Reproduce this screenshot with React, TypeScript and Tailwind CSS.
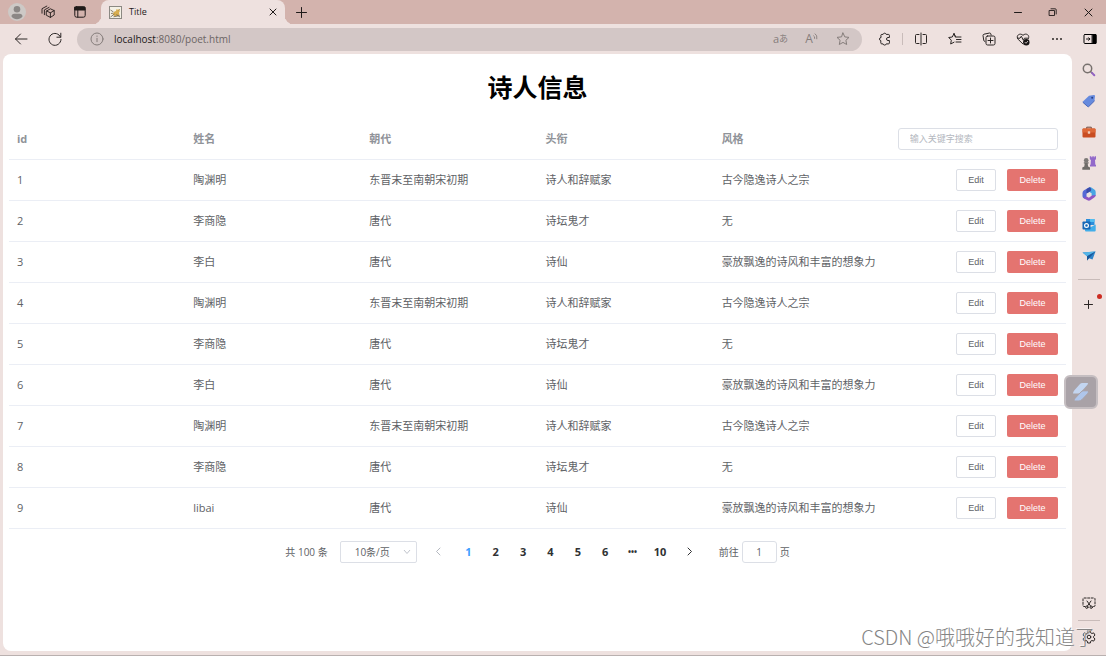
import { useState } from "react";
import type { ReactNode } from "react";

const poets = [
  { id: 1, name: "陶渊明", dynasty: "东晋末至南朝宋初期", title: "诗人和辞赋家", style: "古今隐逸诗人之宗" },
  { id: 2, name: "李商隐", dynasty: "唐代", title: "诗坛鬼才", style: "无" },
  { id: 3, name: "李白", dynasty: "唐代", title: "诗仙", style: "豪放飘逸的诗风和丰富的想象力" },
  { id: 4, name: "陶渊明", dynasty: "东晋末至南朝宋初期", title: "诗人和辞赋家", style: "古今隐逸诗人之宗" },
  { id: 5, name: "李商隐", dynasty: "唐代", title: "诗坛鬼才", style: "无" },
  { id: 6, name: "李白", dynasty: "唐代", title: "诗仙", style: "豪放飘逸的诗风和丰富的想象力" },
  { id: 7, name: "陶渊明", dynasty: "东晋末至南朝宋初期", title: "诗人和辞赋家", style: "古今隐逸诗人之宗" },
  { id: 8, name: "李商隐", dynasty: "唐代", title: "诗坛鬼才", style: "无" },
  { id: 9, name: "libai", dynasty: "唐代", title: "诗仙", style: "豪放飘逸的诗风和丰富的想象力" },
];

const pages = ["1", "2", "3", "4", "5", "6", "•••", "10"];

function Icon({ size = 14, children }: { size?: number; children: ReactNode }) {
  return (
    <svg width={size} height={size} viewBox={`0 0 ${size} ${size}`} fill="none" stroke="currentColor" strokeLinecap="round" strokeLinejoin="round" className="shrink-0">
      {children}
    </svg>
  );
}

function IconButton({ label, className, children }: { label: string; className: string; children: ReactNode }) {
  return (
    <button aria-label={label} className={`flex shrink-0 items-center justify-center ${className}`}>
      {children}
    </button>
  );
}

function TitleBar() {
  return (
    <div className="flex h-6 shrink-0 items-center bg-[#d3b3ad] text-[#1f1a19]">
      <IconButton label="Profile" className="w-[34px] h-6">
        <svg width="18" height="18" viewBox="0 0 18 18">
          <circle cx="9" cy="9" r="9" fill="#cdc9c6" />
          <circle cx="9" cy="6.2" r="3.3" fill="#8b8785" />
          <path d="M3.5 13.5c0-2 1.2-2.8 2.8-2.8h5.4c1.6 0 2.8.8 2.8 2.8-1.4 1.8-3.3 2.7-5.5 2.7s-4.1-.9-5.5-2.7z" fill="#8b8785" />
        </svg>
      </IconButton>
      <IconButton label="Workspaces" className="w-7 h-6">
        <Icon>
          <g strokeWidth=".9">
            <path d="M5.6 6 9.4 3.8 13.2 5.6V10l-3.8 2.4-3.8-2zM5.6 6l3.8 1.8 3.8-2.2M9.4 7.8v4.6" />
            <path d="M3.4 9.7V4.9L8 2.4M1 8.2V3.7L5.8 1.1" />
          </g>
        </Icon>
      </IconButton>
      <IconButton label="Tab actions" className="w-9 h-6">
        <Icon>
          <rect x="1.8" y="1.8" width="10.4" height="10.4" rx="1.8" />
          <path d="M2 2h10v3H2z" fill="currentColor" />
          <path d="M4.8 5v7" />
        </Icon>
      </IconButton>
      <div className="relative ml-[3px] flex h-6 w-[184px] items-center rounded-t-lg bg-[#eee1df] pl-2 pr-1 before:absolute before:bottom-0 before:-left-2 before:size-2 before:rounded-br-lg before:shadow-[3px_3px_0_#eee1df] after:absolute after:bottom-0 after:-right-2 after:size-2 after:rounded-bl-lg after:shadow-[-3px_3px_0_#eee1df]">
        <svg width="13" height="13" viewBox="0 0 13 13" className="shrink-0">
          <rect x=".5" y=".5" width="12" height="12" fill="#f4f1e6" stroke="#8b8983" />
          <path d="M5.5 5.5 7 5l.6-2 1.2.8 1.6-.8.4 2.2-.8 1.6.6 2.4-2 .8-3 .2L3.5 8z" fill="#d8ae4e" />
          <path d="M1.5 4l3 2M1.5 11l4-3M2 7.5l2-.3M10.5 3.5l-.8.8M4.5 10.8l6-1.2M7.5 8.5l3.5 2.5" stroke="#6b6251" strokeWidth=".8" />
        </svg>
        <span className="ml-[7px] flex-1 text-[9px]">Title</span>
        <IconButton label="Close tab" className="size-4">
          <Icon size={8}><path d="M1 1l6 6M7 1 1 7" /></Icon>
        </IconButton>
      </div>
      <IconButton label="New tab" className="w-8 h-6">
        <Icon size={11}><path d="M5.5.5v10M.5 5.5h10" /></Icon>
      </IconButton>
      <div className="flex-1" />
      <IconButton label="Minimize" className="w-[35px] h-6">
        <Icon size={8}><path d="M.5 4.5h7" /></Icon>
      </IconButton>
      <IconButton label="Restore" className="w-[35px] h-6">
        <Icon size={9}><path d="M1.5 2.5h5v5h-5zM3 .8h4.2q1 0 1 1V6" strokeWidth=".9" /></Icon>
      </IconButton>
      <IconButton label="Close" className="w-9 h-6">
        <Icon size={9}><path d="M1 1l7 7M8 1 1 8" /></Icon>
      </IconButton>
    </div>
  );
}

function Toolbar() {
  return (
    <div className="flex h-[30px] shrink-0 items-center text-[#2b2625]">
      <IconButton label="Back" className="ml-1 w-[34px] h-[30px]">
        <Icon><path d="M13 7H1.5M6.5 2 1.5 7l5 5" /></Icon>
      </IconButton>
      <IconButton label="Refresh" className="w-[34px] h-[30px]">
        <Icon><path d="M12.6 5.2A6 6 0 1 0 13 7.5M12.8 1.2v4H8.9" /></Icon>
      </IconButton>
      <div className="ml-[5px] flex h-[23px] flex-1 items-center rounded-full bg-[#d3c7c6] pl-[13px] pr-1 text-[#857d7b]">
        <Icon>
          <circle cx="7" cy="7" r="6" />
          <path d="M7 6.3v3.4M7 4v.4" />
        </Icon>
        <div className="ml-[10px] flex-1 text-[10px] leading-4 text-[#6c6564]">
          <span className="text-[#1d1919]">localhost</span>:8080/poet.html
        </div>
        <IconButton label="Translate" className="w-[31px] h-5 text-[11px] leading-4">
          a<span className="text-[9px]">あ</span>
        </IconButton>
        <IconButton label="Read aloud" className="w-[31px] h-5 text-[12px] leading-4">
          A
          <svg width="5" height="12" viewBox="0 0 5 12" fill="none" stroke="currentColor" strokeWidth=".9">
            <path d="M.3 2.6q1.8.8 1.3 3.2M1.8.6q2.8 1.6 2 5.6" />
          </svg>
        </IconButton>
        <IconButton label="Favorite" className="w-[31px] h-5">
          <Icon><path d="M7 1l1.8 3.9 4.2.5-3.1 2.9.8 4.2L7 10.4l-3.7 2.1.8-4.2L1 5.4l4.2-.5z" /></Icon>
        </IconButton>
      </div>
      <IconButton label="Extensions" className="ml-[5px] w-[35px] h-[30px]">
        <Icon><path d="M2.8 3.4q0-1 1-1h1.3a1.6 1.6 0 0 1 3.1 0h2.2q1 0 1 1v2.1H10a1.5 1.5 0 0 0 0 3h1.4v2.4q0 1-1 1H8.2a1.6 1.6 0 0 1-3.1 0H3.8q-1 0-1-1V8.7a1.7 1.7 0 0 1 0-3.3z" /></Icon>
      </IconButton>
      <div className="h-3 w-px bg-[#c9bcba]" />
      <IconButton label="Split screen" className="w-[35px] h-[30px]">
        <Icon><path d="M5 2.5H2.5q-1 0-1 1v7q0 1 1 1H5M9 2.5h2.5q1 0 1 1v7q0 1-1 1H9M7 1v12" /></Icon>
      </IconButton>
      <IconButton label="Favorites" className="w-[34px] h-[30px]">
        <Icon><path d="M7.5 5 6 1.5 4.3 5l-3.6.5 2.6 2.7-.6 3.8 3.3-1.8M6 1.5 7.5 5H13M8.5 7.5H13M8 10h5" /></Icon>
      </IconButton>
      <IconButton label="Collections" className="w-[34px] h-[30px]">
        <Icon>
          <path d="M3 9.5 1.8 8.7 1 3.5q0-1 1-1.3L7.6 1q1 0 1.3 1l.2 1" />
          <rect x="4" y="4" width="9" height="9" rx="1.6" />
          <path d="M8.5 6v5M6 8.5h5" />
        </Icon>
      </IconButton>
      <IconButton label="Browser essentials" className="w-[34px] h-[30px]">
        <Icon>
          <path d="M7 12 2.2 7.4C-.8 3.6 4 .4 7 3.3c3-2.9 7.4 0 5.3 3.4M1.5 6.2H4l1.3-2 2 4 1.2-2h3" />
          <circle cx="10.3" cy="10.3" r="3.2" fill="#171313" stroke="none" />
          <path d="M9 10.3l1 1 1.7-2" stroke="#eee1df" strokeWidth=".8" />
        </Icon>
      </IconButton>
      <IconButton label="More" className="w-[34px] h-[30px]">
        <Icon size={12}>
          <g fill="currentColor" stroke="none">
            <circle cx="2" cy="6" r="1" /><circle cx="6" cy="6" r="1" /><circle cx="10" cy="6" r="1" />
          </g>
        </Icon>
      </IconButton>
      <IconButton label="Sidebar" className="w-8 h-[30px] text-black">
        <Icon>
          <rect x="1" y="2.5" width="12" height="9" rx="1" />
          <path d="M9.5 2.5H13v9H9.5z" fill="currentColor" />
          <path d="M3.5 7h3.3M5.6 5.7 6.9 7 5.6 8.3" strokeWidth=".9" />
        </Icon>
      </IconButton>
    </div>
  );
}

const sideApps = [
  {
    label: "Search",
    icon: (
      <>
        <circle cx="5.5" cy="5.5" r="4.2" stroke="#77716e" strokeWidth="1.5" />
        <path d="M8.7 8.7l1.3 1.2" stroke="#77716e" strokeWidth="1.5" />
        <path d="M10 9.9l2.3 2.3" stroke="#9263c2" strokeWidth="2" />
      </>
    ),
  },
  {
    label: "Shopping",
    icon: (
      <>
        <path d="M1.2 7.3 7 1.7l5-.7q1 0 1 1l-.6 5-5.5 5.4q-.8.7-1.6 0L1.2 8.8q-.7-.8 0-1.5z" fill="#668ade" stroke="none" />
        <path d="M1 8.4l4.8 4.2q.6.4 1.1-.2l5.5-5.4" stroke="#4d68b8" />
        <circle cx="10.2" cy="3.8" r="1" fill="#293f85" stroke="none" />
      </>
    ),
  },
  {
    label: "Tools",
    icon: (
      <>
        <path d="M4.7 3.5V2.2h4.6v1.3" stroke="#73483a" />
        <rect x=".5" y="3.5" width="13" height="9" rx="1" fill="#c94d22" stroke="none" />
        <path d="M.5 4.5q0-1 1-1h11q1 0 1 1v3H.5z" fill="#dd6838" stroke="none" />
        <rect x="5.8" y="6.2" width="2.4" height="2.6" rx=".5" fill="#f0cdbb" stroke="none" />
      </>
    ),
  },
  {
    label: "Games",
    icon: (
      <g stroke="none">
        <path d="M7.8.3h1.5v1h1v-1h1.5v1h.8v-1H14v3l-1 .8.3 4.4.7.6v1.4H8v-1.4l.6-.6.3-4.4-1.1-.8z" fill="#9269ca" />
        <circle cx="4.2" cy="4.2" r="2.3" fill="#7c7977" />
        <path d="M1.8 6.2h4.8v1.4H5.7l.4 2.8 1.9 1v2.3H.3v-2.3l2-1 .4-2.8h-.9z" fill="#6f6c69" />
      </g>
    ),
  },
  {
    label: "Microsoft 365",
    icon: (
      <g stroke="none">
        <path d="M7.5.3 2 3.3Q.5 4.2.5 6v3.3q0 1.8 2 2.2 2 .3 2-1.8V6.5L8.8 4z" fill="#5668d6" />
        <path d="M7 .4q1.2-.6 2.3.1l3 1.9Q13.7 3.3 13.7 5v3.6q-.6 1.7-2.6 1.1L9.6 8.6V6.3L5.4 3.8z" fill="#48a5e3" />
        <path d="M13.7 8.1q0 1.5-1.4 2.4l-4 2.8q-1.4.8-2.8 0L2 11.4 1 9.8q1.8 1.6 3.6-.2l2.3 1.2 3-2.2z" fill="#8f55c4" />
        <path d="M7.6.2 4.5 2v4.5L8.8 4q1.3-2.2-1.2-3.8z" fill="#3b4ca9" />
      </g>
    ),
  },
  {
    label: "Outlook",
    icon: (
      <g stroke="none">
        <path d="M4 1h8.5v6H4z" fill="#2b8edb" />
        <path d="M8 1h4.5v3H8z" fill="#52bdf0" />
        <path d="M3 6.5l5 3 5.7-3v6q0 1-1 1H4q-1 0-1-1z" fill="#42aee9" />
        <rect x=".5" y="3.5" width="8" height="8" rx=".8" fill="#1767b6" />
        <circle cx="4.5" cy="7.5" r="1.9" stroke="white" strokeWidth="1.2" fill="none" />
      </g>
    ),
  },
  {
    label: "Drop",
    icon: (
      <g stroke="none">
        <path d="M.5 3.5 13.5 2.5 10.5 10.5 7 9.2 5 11.5V7.2z" fill="#2c83c9" />
        <path d="M.5 3.5 13.5 2.5 5 7.2z" fill="#55b5e7" />
        <path d="M13.5 2.5 5 7.2v4.3l2-2.3z" fill="#19579a" />
      </g>
    ),
  },
];

function Sidebar() {
  return (
    <aside className="flex w-[34px] shrink-0 flex-col items-center text-[#2b2625]">
      {sideApps.map((app) => (
        <IconButton key={app.label} label={app.label} className="h-[31px] w-[34px]">
          <Icon>{app.icon}</Icon>
        </IconButton>
      ))}
      <div className="mt-2 h-px w-[22px] bg-[#c8bbb9]" />
      <button aria-label="Add" className="relative mt-[9px] flex h-[31px] w-[34px] shrink-0 items-center justify-center">
        <Icon size={10}><path d="M4.5.5v8M.5 4.5h8" /></Icon>
        <span className="absolute right-1 top-[5px] size-[5px] rounded-full bg-[#cc2c22]" />
      </button>
      <div className="flex-1" />
      <IconButton label="Screenshot" className="h-[31px] w-[34px]">
        <Icon>
          <path d="M3 10.5H2q-1 0-1-1V3q0-1 1-1h10q1 0 1 1v6.5q0 1-1 1h-1" strokeDasharray="2 1.5" />
          <path d="M5 5l3.6 5M9 5l-3.6 5" />
          <circle cx="4.8" cy="11.2" r="1.2" /><circle cx="9.2" cy="11.2" r="1.2" />
        </Icon>
      </IconButton>
      <div className="mt-[2px] h-px w-[22px] bg-[#c8bbb9]" />
      <IconButton label="Settings" className="mb-[3px] h-[31px] w-[34px]">
        <Icon>
          <path d="M5.7 1h2.6l.4 1.8 1.2.7 1.8-.6L13 5.1l-1.4 1.3v1.3L13 8.9l-1.3 2.2-1.8-.6-1.2.7L8.3 13H5.7l-.4-1.8-1.2-.7-1.8.6L1 8.9l1.4-1.2V6.4L1 5.1l1.3-2.2 1.8.6 1.2-.7z" />
          <circle cx="7" cy="7" r="1.8" />
        </Icon>
      </IconButton>
    </aside>
  );
}

function PoetTable() {
  const [keyword, setKeyword] = useState("");
  const rows = poets.filter((p) => p.name.includes(keyword));

  return (
    <table className="w-full table-fixed border-collapse text-left text-[11px] leading-4 text-[#606266]">
      <thead className="text-[#909399]">
        <tr className="h-10 border-b border-[#ebeef5]">
          <th className="px-2">id</th>
          <th className="px-2">姓名</th>
          <th className="px-2">朝代</th>
          <th className="px-2">头衔</th>
          <th className="px-2">风格</th>
          <th className="px-2">
            <input
              type="text"
              aria-label="输入关键字搜索"
              placeholder="输入关键字搜索"
              value={keyword}
              onChange={(e) => setKeyword(e.target.value)}
              className="block h-[22px] w-full rounded-[3px] border border-[#dcdfe6] px-[11px] text-[9px] font-normal placeholder:text-[#b4b8c0] focus:outline-none"
            />
          </th>
        </tr>
      </thead>
      <tbody>
        {rows.map((p) => (
          <tr key={p.id} className="h-[41px] border-b border-[#ebeef5]">
            <td className="px-2">{p.id}</td>
            <td className="px-2">{p.name}</td>
            <td className="px-2">{p.dynasty}</td>
            <td className="px-2">{p.title}</td>
            <td className="px-2">{p.style}</td>
            <td className="px-2">
              <div className="flex justify-end gap-[11px] font-['Liberation_Sans',sans-serif] text-[9px]">
                <button className="h-[22px] w-10 rounded-[2px] border border-[#dcdfe6] bg-white">Edit</button>
                <button className="h-[22px] w-[51px] rounded-[2px] bg-[#e47470] text-white">Delete</button>
              </div>
            </td>
          </tr>
        ))}
      </tbody>
    </table>
  );
}

function Pagination() {
  const [page, setPage] = useState("1");

  return (
    <nav className="mt-3 flex items-center justify-center text-[10px] leading-4 text-[#606266]">
      <span>共 100 条</span>
      <div className="relative ml-3">
        <select aria-label="每页条数" className="h-[22px] w-[77px] appearance-none rounded-[2px] border border-[#dcdfe6] bg-white pl-[14px] text-[10px]">
          <option>10条/页</option>
        </select>
        <svg width="8" height="6" viewBox="0 0 8 6" fill="none" stroke="#c0c4cc" className="pointer-events-none absolute right-[6px] top-2">
          <path d="M1 1l3 3.5L7 1" />
        </svg>
      </div>
      <IconButton label="上一页" className="ml-2 h-[22px] w-[27px] text-[#b4b8c0]">
        <Icon size={9}><path d="M6 1 2.5 4.5 6 8" /></Icon>
      </IconButton>
      <ul className="ml-[3px] flex w-[219px] text-[11px] font-bold">
        {pages.map((p) => (
          <li key={p} className="flex-1">
            <button
              onClick={() => setPage(p)}
              className={`h-[22px] w-full ${p === "•••" ? "text-[8px]" : ""} ${p === page ? "text-[#409eff]" : "text-[#303133]"}`}
            >
              {p}
            </button>
          </li>
        ))}
      </ul>
      <IconButton label="下一页" className="ml-[2px] h-[22px] w-[27px] text-[#303133]">
        <Icon size={9}><path d="M3 1l3.5 3.5L3 8" /></Icon>
      </IconButton>
      <label className="ml-4 flex items-center gap-[3px]">
        前往
        <input type="text" defaultValue="1" className="h-[22px] w-[35px] rounded-[3px] border border-[#dcdfe6] text-center text-[10px]" />
        页
      </label>
    </nav>
  );
}

export default function App() {
  return (
    <div className="relative flex h-screen flex-col overflow-hidden border-b border-[#b9b0af] bg-[#eee1df] font-['Open_Sans','Noto_Sans_CJK_SC',sans-serif]">
      <TitleBar />
      <Toolbar />
      <div className="flex min-h-0 flex-1">
        <main className="mb-1 ml-[3px] flex-1 rounded-lg bg-white px-[6px] pt-[15px]">
          <h1 className="mb-[14px] text-center text-[25px] font-bold leading-9 text-black">诗人信息</h1>
          <PoetTable />
          <Pagination />
        </main>
        <Sidebar />
      </div>

      {/* floating assistant button */}
      <button aria-label="Assistant" className="absolute right-2 top-[375px] flex size-[34px] items-center justify-center rounded-md border-2 border-[#c5bec1] bg-[#a9a2a7]">
        <svg width="18" height="20" viewBox="0 0 18 20">
          <path d="M1 11.5Q1 10 2.2 8.6L8 2q1-1 2.2-1h5.8q0 1.2-1 2.3L9.2 9.8q-1.4 1.7-3 1.7z" fill="#c3d5f0" />
          <path d="M2 19q0-1.4 1-2.6l5.8-6.2q1.2-1.4 2.8-1.4h4.9q.2 1.6-1 3L10 17.600Q8.700 19 7 19z" fill="#afc6eb" stroke="#a9a2a7" />
        </svg>
      </button>

      {/* watermark */}
      <span className="pointer-events-none absolute bottom-1 right-[11px] whitespace-nowrap font-['Noto_Sans_CJK_SC',sans-serif] text-[20px] font-light leading-7 text-[#858585] [text-shadow:-1px_-1px_0_#ffffff99]">
        CSDN @哦哦好的我知道了
      </span>
    </div>
  );
}
